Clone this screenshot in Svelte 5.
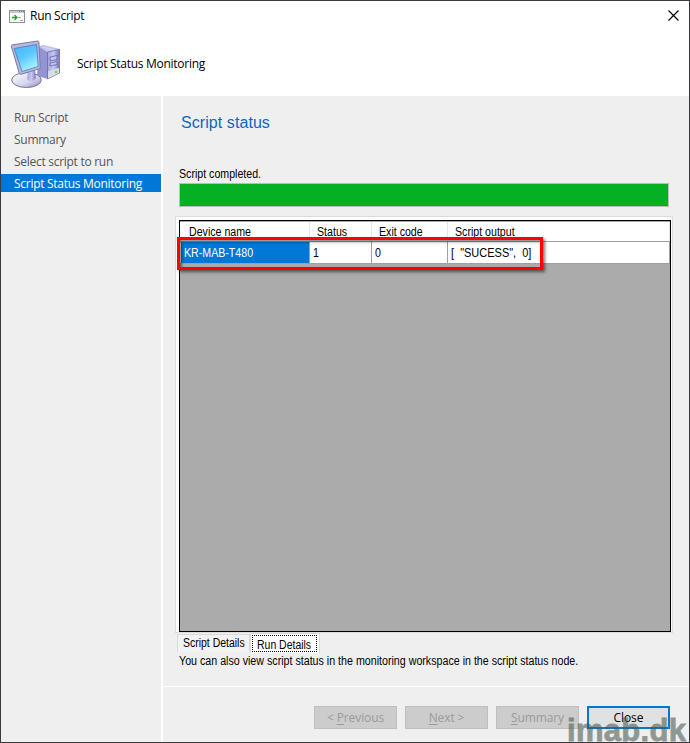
<script>
  const steps = [
    { label: 'Run Script' },
    { label: 'Summary' },
    { label: 'Select script to run' },
    { label: 'Script Status Monitoring', active: true }
  ];
  const columns = ['Device name', 'Status', 'Exit code', 'Script output'];
  const row = ['KR-MAB-T480', '1', '0', '[  "SUCESS",  0]'];
  const buttons = [
    { pre: '< ', key: 'P', rest: 'revious' },
    { pre: '', key: 'N', rest: 'ext >' },
    { pre: '', key: 'S', rest: 'ummary' }
  ];
</script>

<div class="window">
  <header>
    <div class="titlebar">
      <svg class="app" width="16" height="13" viewBox="0 0 16 13">
        <rect x=".5" y=".5" width="15" height="12" fill="#fbfbfb" stroke="#8b9299" />
        <path d="M1 1.5h14M1 2.5h14" stroke="#c5cad0" />
        <path d="M10 1.5h1M12 1.5h1M14 1.5h1" stroke="#747b82" />
        <path d="M3 7.5h5M5.500 5l2.500 2.500L5.500 10" fill="none" stroke="#21a32b" stroke-width="1.3" />
        <path d="M9 7.5h3M11 10.5h3" stroke="#a5abb0" />
      </svg>
      <span class="title">Run Script</span>
      <svg class="close" width="11" height="11" viewBox="0 0 11 11">
        <path d="M.5 .5l10 10M10.5 .5l-10 10" stroke="#000" stroke-width="1.15" />
      </svg>
    </div>
    <div class="banner">
      <svg class="computer" width="52" height="50" viewBox="0 0 52 50">
        <defs>
          <linearGradient id="screen" x1="0" y1="0" x2=".5" y2="1">
            <stop offset="0" stop-color="#4db5f4" /><stop offset=".5" stop-color="#58c5ff" /><stop offset="1" stop-color="#a5f0ff" />
          </linearGradient>
          <linearGradient id="metal" x1="0" y1="0" x2="1" y2="0">
            <stop offset="0" stop-color="#a3a3dc" /><stop offset=".5" stop-color="#c9c9ef" /><stop offset="1" stop-color="#7374b8" />
          </linearGradient>
          <linearGradient id="base" x1="0" y1="0" x2="1" y2="1">
            <stop offset="0" stop-color="#fff" /><stop offset=".6" stop-color="#d5d4ec" /><stop offset="1" stop-color="#8686bc" />
          </linearGradient>
        </defs>
        <path d="M29 7l4-1.5 17 4-8 3z" fill="#cfcff3" stroke="#a5a5d8" stroke-width=".7" />
        <path d="M29 7l9 5v27l-11-3z" fill="#9494d3" />
        <path d="M37.500 12l12-2.500v23.500l-12 6z" fill="url(#metal)" stroke="#6a6aae" stroke-width=".8" />
        <path d="M40 17l7-1.500v4l-7 1.500zM40 23l7-1.500v3l-7 1.500z" fill="#c3c3ec" stroke="#6161ac" stroke-width=".8" />
        <path d="M38 31l11-3v5l-11 5.500z" fill="#d8dbea" />
        <circle cx="46" cy="32" r="1.300" fill="#65dc50" />
        <ellipse cx="16.500" cy="40" rx="14.800" ry="7.500" fill="url(#base)" stroke="#77779b" />
        <path d="M18 32l7-2 1 8q-4 6-9 1z" fill="url(#metal)" />
        <path d="M1.300 6.200Q1.300 5 2.500 4.800L27.500 1q1.300 0 1.400 1l1.400 26.500L11 34.300q-1.500 0-1.800-1.200z" fill="#b7b7d8" stroke="#7b7baa" />
        <path d="M4.200 8.500L26.600 4.500l1.500 22-16 5z" fill="url(#screen)" stroke="#486db6" stroke-width=".7" />
      </svg>
      <span>Script Status Monitoring</span>
    </div>
  </header>

  <div class="body">
    <nav>
      {#each steps as s}
        <div class="step" class:active={s.active}>{s.label}</div>
      {/each}
    </nav>
    <main>
      <section>
        <h1>Script status</h1>
        <p class="status"><span class="narrow">Script completed.</span></p>
        <div class="progress"></div>
        <div class="panel">
          <div class="grid">
            <div class="cells head">
              {#each columns as c}<div><span class="narrow">{c}</span></div>{/each}
            </div>
            <div class="cells data">
              {#each row as c, i}<div class:selected={i === 0}><span class="narrow">{c}</span></div>{/each}
            </div>
          </div>
          <div class="highlight"></div>
        </div>
        <div class="tabs">
          <div class="tab"><span class="narrow">Script Details</span></div>
          <div class="tab current"><div class="focus"><span class="narrow">Run Details</span></div></div>
        </div>
        <p class="note"><span class="narrow">You can also view script status in the monitoring workspace in the script status node.</span></p>
      </section>
      <footer>
        {#each buttons as b}
          <button disabled><span>{b.pre}<u>{b.key}</u>{b.rest}</span></button>
        {/each}
        <button class="primary">Close</button>
      </footer>
    </main>
  </div>
  <div class="watermark">imab.dk</div>
</div>

<style>
  :global(body) { margin: 0; }
  * { box-sizing: border-box; }
  .window {
    position: relative; width: 690px; height: 743px; border: 1px solid #3b3b3d;
    background: #efefef; display: flex; flex-direction: column; overflow: hidden;
    font: 12px/16px "Open Sans", "Noto Sans", sans-serif; letter-spacing: -0.28px; color: #000;
  }
  header { height: 95px; background: #fff; flex: none; }
  .titlebar { display: flex; align-items: center; height: 29px; padding: 0 10px 0 8px; }
  .app { margin-top: 2px; }
  .title { margin-left: 5px; }
  .close { margin-left: auto; }
  .banner { display: flex; align-items: center; height: 66px; padding-left: 9px; }
  .banner svg { margin-top: 3px; }
  .banner span { margin: 1px 0 0 15px; }
  .body { flex: 1; display: flex; min-height: 0; }
  nav { width: 162px; border-right: 2px solid #fff; padding-top: 12px; color: #555; flex: none; }
  .step { height: 18px; line-height: 19px; margin-bottom: 4px; padding-left: 13px; }
  .active { background: #0078d7; color: #fff; }
  main { flex: 1; display: flex; flex-direction: column; min-width: 0; }
  section {
    height: 591px; border-bottom: 1px solid #fff; padding: 17px 16px 0 12px;
    font: 12px/14px "Liberation Sans", Arial, sans-serif; letter-spacing: 0; flex: none;
  }
  .narrow { display: inline-block; transform: scaleX(0.885); transform-origin: 0 50%; white-space: pre; }
  h1 { margin: 0 0 0 6px; font-size: 16px; line-height: 20px; font-weight: 400; color: #0f65c4; letter-spacing: 0.07px; }
  p { margin: 0; height: 14px; }
  .status { margin: 34px 0 2px 4px; }
  .progress { height: 24px; width: 490px; margin-left: 4px; background: #06b025; border: 1px solid #bcbcbc; }
  .panel { position: relative; width: 498px; height: 417px; margin-top: 9px; background: #fff; border: 1px solid #dcdcdc; padding: 3px; }
  .grid { width: 492px; height: 412px; border: 1px solid #000; background: #ababab; padding-top: 1px; }
  .cells { display: grid; grid-template-columns: 130px 62px 76px 222px; background: #fff; }
  .head { height: 20px; border-bottom: 1px solid #a0a0a0; }
  .head div { padding: 3px 0 0 7px; border-right: 1px solid #e5e5e5; }
  .head div:first-child { padding-left: 9px; }
  .data { height: 22px; border-bottom: 1px solid #a0a0a0; }
  .data div { padding: 4px 0 0 3px; border-right: 1px solid #a0a0a0; }
  .data div:last-child .narrow { transform: scaleX(0.915); }
  .data .selected { background: #0078d7; color: #fff; margin-left: 1px; }
  .highlight { position: absolute; left: 1px; top: 20px; width: 366px; height: 33px; border: 3px solid #f00; box-shadow: 2px 2px 3px #0008, inset 2px 2px 3px #0007; }
  .tabs { display: flex; height: 20px; padding-left: 2px; }
  .tab { height: 18px; width: 73px; margin-top: 1px; border: 1px solid #dadada; border-bottom: 0; background: #f2f2f2; padding: 1px 0 0 5px; }
  .tab .narrow { transform: scaleX(0.872); }
  .current { height: 20px; width: 70px; margin-top: 0; background: #fff; padding: 1px; }
  .focus { width: 65px; height: 17px; border: 1px dotted #000; padding: 2px 0 0 4px; }
  .note { margin: 1px 0 0 4px; }
  .note .narrow { transform: scaleX(0.889); }
  footer { display: flex; justify-content: flex-end; gap: 8px; padding: 19px 19px 0 0; }
  button {
    width: 83px; height: 23px; padding: 1px 0 0; border: 1px solid #bfbfbf; background: #ccc;
    color: #9b9b9b; font: inherit; letter-spacing: -0.1px;
  }
  .primary { border: 2px solid #0078d7; background: #e1e1e1; color: #000; }
  u { text-underline-offset: 2px; }
  .watermark {
    position: absolute; left: 566px; top: 714px; color: #4a5a52; opacity: 0.58;
    font: bold 31px/31px "Liberation Sans", Arial, sans-serif; letter-spacing: 0.3px;
    -webkit-text-stroke: 0.8px #4a5a52;
  }
</style>
